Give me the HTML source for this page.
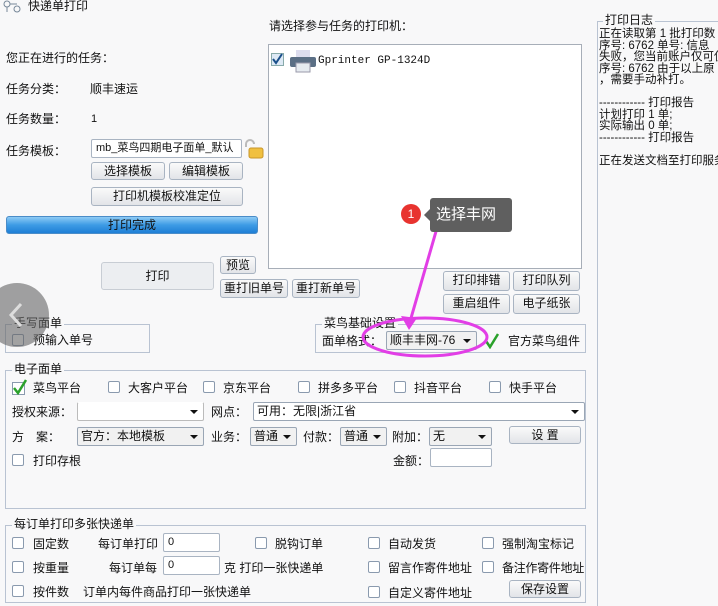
<!DOCTYPE html><html style="overflow:hidden;width:718px;height:606px"><head><meta charset="utf-8"><style>
*{box-sizing:border-box;margin:0;padding:0}
body{width:718px;height:606px;background:#f8f8f9;font-family:"Liberation Sans","Noto Sans CJK SC",sans-serif;font-size:12px;color:#111;position:relative;overflow:hidden}
.a{position:absolute;white-space:nowrap;line-height:14px}
.btn{position:absolute;border:1px solid #a9b4c2;border-radius:3px;background:linear-gradient(#fafafa,#e2e4e8);text-align:center;font-size:12px;line-height:16px}
.grp{position:absolute;border:1px solid #b9c3d2}
.lg{position:absolute;background:#f8f8f9;padding:0 2px;line-height:13px}
.cb{position:absolute;width:12px;height:12px;border:1px solid #8a9aae;background:#fff;border-radius:2px}
.sel{position:absolute;border:1px solid #9aa6b5;background:#fff;height:19px;line-height:17px;padding-left:3px;border-radius:2px}
.sel:after{content:"";position:absolute;right:5px;top:7px;border:4px solid transparent;border-top:4px solid #111}
.inp{position:absolute;border:1px solid #a9b4c2;background:#fff;border-radius:2px;padding-left:4px;line-height:16px}
</style></head><body>
<svg class="a" style="left:3px;top:0" width="22" height="13"><circle cx="4" cy="4" r="3" fill="none" stroke="#789" /><circle cx="14" cy="9" r="3" fill="none" stroke="#789"/><path d="M4 7v5M7 4h7" stroke="#789"/></svg>
<div class="a" style="left:28px;top:-1px">快递单打印</div>
<div class="a" style="left:6px;top:51px">您正在进行的任务：</div>
<div class="a" style="left:6px;top:82px">任务分类：</div><div class="a" style="left:90px;top:82px">顺丰速运</div>
<div class="a" style="left:6px;top:112px">任务数量：</div><div class="a" style="left:91px;top:112px;font-size:11px">1</div>
<div class="a" style="left:6px;top:144px">任务模板：</div>
<div class="inp" style="left:91px;top:139px;width:151px;height:19px;font-size:11px">mb_菜鸟四期电子面单_默认</div>
<svg class="a" style="left:243px;top:138px" width="22" height="22"><path d="M3 9V6a4 4 0 0 1 8 0" fill="none" stroke="#bbb" stroke-width="2"/><rect x="6" y="10" width="14" height="10" rx="2" fill="#f0c040" stroke="#c9962a"/></svg>
<div class="btn" style="left:91px;top:162px;width:74px;height:18px">选择模板</div>
<div class="btn" style="left:169px;top:162px;width:74px;height:18px">编辑模板</div>
<div class="btn" style="left:91px;top:187px;width:152px;height:19px">打印机模板校准定位</div>
<div class="btn" style="left:6px;top:216px;width:252px;height:18px;background:linear-gradient(#8ecbf5,#3d9be5 50%,#1f7fd6);border-color:#4a8cc8">打印完成</div>
<div class="btn" style="left:101px;top:262px;width:113px;height:28px;line-height:26px;border-color:#c8cdd4;background:#eceef1">打印</div>
<div class="btn" style="left:220px;top:256px;width:36px;height:18px">预览</div>
<div class="btn" style="left:220px;top:279px;width:68px;height:19px">重打旧单号</div>
<div class="btn" style="left:292px;top:279px;width:68px;height:19px">重打新单号</div>
<div class="a" style="left:269px;top:19px">请选择参与任务的打印机：</div>
<div style="position:absolute;left:268px;top:44px;width:314px;height:225px;background:#fff;border:1px solid #a7aeb8"></div>
<svg class="a" style="left:271px;top:53px" width="14" height="14"><rect x=".5" y=".5" width="12" height="12" fill="#dde9f5" stroke="#8aa"/><path d="M2 6l3 4 6-9" stroke="#1a4f8a" stroke-width="2" fill="none"/></svg>
<svg class="a" style="left:289px;top:49px" width="28" height="24"><rect x="7" y="1" width="14" height="8" fill="#dde"/><rect x="1" y="8" width="26" height="10" rx="2" fill="#5b6f85"/><rect x="7" y="14" width="14" height="9" fill="#e6ebf0" stroke="#99a"/></svg>
<div class="a" style="left:318px;top:54px;font-family:'Liberation Mono',monospace;font-size:11px">Gprinter  GP-1324D</div>
<div class="btn" style="left:443px;top:271px;width:67px;height:20px">打印排错</div>
<div class="btn" style="left:513px;top:271px;width:67px;height:20px">打印队列</div>
<div class="btn" style="left:443px;top:294px;width:67px;height:20px">重启组件</div>
<div class="btn" style="left:513px;top:294px;width:67px;height:20px">电子纸张</div>
<div class="grp" style="left:597px;top:21px;width:121px;height:585px;border-right:none;border-bottom:none"></div>
<div class="lg" style="left:603px;top:14px">打印日志</div>
<div class="a" style="left:599px;top:29px;line-height:11.5px;font-size:11.5px">正在读取第 1 批打印数<br>序号: 6762 单号:  信息<br>失败，您当前账户仅可使<br>序号: 6762 由于以上原<br>，需要手动补打。<br><br>------------ 打印报告<br>计划打印 1 单;<br>实际输出 0 单;<br>------------ 打印报告<br><br>正在发送文档至打印服务</div>
<div class="grp" style="left:5px;top:324px;width:145px;height:29px"></div>
<div class="lg" style="left:12px;top:317px">手写面单</div>
<div class="cb" style="left:12px;top:334px"></div><div class="a" style="left:33px;top:333px">预输入单号</div>
<div class="grp" style="left:315px;top:324px;width:271px;height:29px"></div>
<div class="lg" style="left:322px;top:317px">菜鸟基础设置</div>
<div class="a" style="left:322px;top:334px">面单格式：</div>
<div class="sel" style="left:386px;top:331px;width:91px;background:#f1f1f1">顺丰丰网-76</div>
<svg class="a" style="left:484px;top:333px" width="16" height="16"><path d="M2 8l4 6 8-13" stroke="#2aa12a" stroke-width="2.5" fill="none"/></svg>
<div class="a" style="left:508px;top:334px">官方菜鸟组件</div>
<div class="grp" style="left:5px;top:370px;width:581px;height:139px"></div>
<div class="lg" style="left:12px;top:363px">电子面单</div>
<svg class="a" style="left:12px;top:379px" width="16" height="16"><rect x=".5" y="3.5" width="12" height="12" fill="#fff" stroke="#8a9aae"/><path d="M2 9l4 5 8-13" stroke="#2aa12a" stroke-width="2.5" fill="none"/></svg>
<div class="a" style="left:33px;top:381px">菜鸟平台</div>
<div class="cb" style="left:108px;top:381px"></div><div class="a" style="left:128px;top:381px">大客户平台</div>
<div class="cb" style="left:203px;top:381px"></div><div class="a" style="left:223px;top:381px">京东平台</div>
<div class="cb" style="left:298px;top:381px"></div><div class="a" style="left:318px;top:381px">拼多多平台</div>
<div class="cb" style="left:394px;top:381px"></div><div class="a" style="left:414px;top:381px">抖音平台</div>
<div class="cb" style="left:489px;top:381px"></div><div class="a" style="left:509px;top:381px">快手平台</div>
<div class="a" style="left:12px;top:405px">授权来源：</div>
<div class="sel" style="left:77px;top:402px;width:127px;border-color:#fff #bbb #bbb #bbb"></div>
<div class="a" style="left:211px;top:405px">网点：</div>
<div class="sel" style="left:253px;top:402px;width:332px">可用：无限|浙江省</div>
<div class="a" style="left:12px;top:430px">方　案：</div>
<div class="sel" style="left:77px;top:427px;width:127px;background:#f1f1f1">官方：本地模板</div>
<div class="a" style="left:211px;top:430px">业务：</div>
<div class="sel" style="left:250px;top:427px;width:47px;background:#f1f1f1">普通</div>
<div class="a" style="left:303px;top:430px">付款：</div>
<div class="sel" style="left:340px;top:427px;width:47px;background:#f1f1f1">普通</div>
<div class="a" style="left:392px;top:430px">附加：</div>
<div class="sel" style="left:429px;top:427px;width:63px;background:#f1f1f1">无</div>
<div class="btn" style="left:509px;top:426px;width:72px;height:18px">设 置</div>
<div class="cb" style="left:12px;top:454px"></div><div class="a" style="left:33px;top:454px">打印存根</div>
<div class="a" style="left:393px;top:454px">金额：</div>
<div class="inp" style="left:430px;top:448px;width:62px;height:19px"></div>
<div class="grp" style="left:5px;top:525px;width:581px;height:78px"></div>
<div class="lg" style="left:12px;top:518px">每订单打印多张快递单</div>
<div class="cb" style="left:12px;top:537px"></div><div class="a" style="left:33px;top:537px">固定数</div>
<div class="a" style="left:98px;top:537px">每订单打印</div>
<div class="inp" style="left:163px;top:533px;width:57px;height:19px;font-size:11px">0</div>
<div class="cb" style="left:255px;top:537px"></div><div class="a" style="left:275px;top:537px">脱钩订单</div>
<div class="cb" style="left:368px;top:537px"></div><div class="a" style="left:388px;top:537px">自动发货</div>
<div class="cb" style="left:482px;top:537px"></div><div class="a" style="left:502px;top:537px">强制淘宝标记</div>
<div class="cb" style="left:12px;top:561px"></div><div class="a" style="left:33px;top:561px">按重量</div>
<div class="a" style="left:109px;top:561px">每订单每</div>
<div class="inp" style="left:163px;top:556px;width:57px;height:19px;font-size:11px">0</div>
<div class="a" style="left:224px;top:561px">克 打印一张快递单</div>
<div class="cb" style="left:368px;top:561px"></div><div class="a" style="left:388px;top:561px">留言作寄件地址</div>
<div class="cb" style="left:482px;top:561px"></div><div class="a" style="left:502px;top:561px;letter-spacing:-0.3px">备注作寄件地址</div>
<div class="cb" style="left:12px;top:585px"></div><div class="a" style="left:33px;top:585px">按件数</div>
<div class="a" style="left:83px;top:585px">订单内每件商品打印一张快递单</div>
<div class="cb" style="left:368px;top:586px"></div><div class="a" style="left:388px;top:586px">自定义寄件地址</div>
<div class="btn" style="left:509px;top:580px;width:72px;height:18px">保存设置</div>
<div style="position:absolute;left:-15px;top:283px;width:64px;height:64px;border-radius:50%;background:rgba(100,100,100,.6)"></div>
<svg class="a" style="left:8px;top:302px" width="16" height="26"><path d="M13 2L3 13l10 11" stroke="#ddd" stroke-width="3" fill="none"/></svg>
<svg class="a" style="left:0;top:0" width="718" height="606"><ellipse cx="425" cy="337" rx="62" ry="19" fill="none" stroke="#e23ee6" stroke-width="3"/><path d="M437 228L409 325" stroke="#e23ee6" stroke-width="3"/><path d="M401 316l8 14 8-12z" fill="#e23ee6"/></svg>
<div style="position:absolute;left:401px;top:204px;width:20px;height:20px;border-radius:50%;background:#e8332f;color:#fff;text-align:center;line-height:20px;font-size:12px">1</div>
<div style="position:absolute;left:430px;top:198px;width:82px;height:34px;background:#5f5f5f;border-radius:3px;color:#fff;font-size:15px;line-height:34px;padding-left:6px">选择丰网</div>
<div style="position:absolute;left:424px;top:209px;border:6px solid transparent;border-right:6px solid #5f5f5f;border-left:none"></div>
</body></html>
